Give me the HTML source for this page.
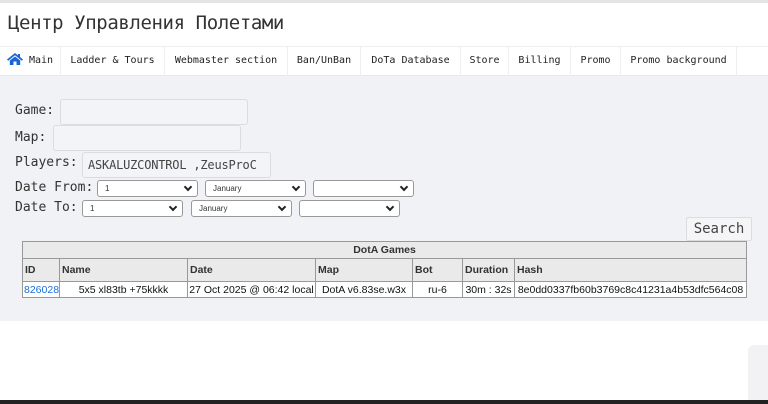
<!DOCTYPE html>
<html><head><meta charset="utf-8"><style>
*{box-sizing:border-box;margin:0;padding:0}
body{width:768px;height:404px;overflow:hidden;background:#fff;font-family:"DejaVu Sans Mono","Liberation Mono",monospace;color:#333;position:relative}
.top{position:absolute;left:0;top:0;width:768px;height:3px;background:#e4e4e6}
h1{position:absolute;left:8px;top:12px;font-size:19px;font-weight:normal;color:#333;font-family:"DejaVu Sans Mono","Liberation Mono","Noto Sans CJK SC",monospace;letter-spacing:-0.4px}
.nav{position:absolute;left:0;top:46px;height:30px;width:768px;border-top:1px solid #eee;border-bottom:1px solid #e8e8e8;display:flex}
.nav div{height:29px;line-height:28px;font-size:10px;border-right:1px solid #eee;text-align:center;color:#222}
.main{position:absolute;left:0;top:76px;width:768px;height:245px;background:#f1f2f6}
.lbl{position:absolute;font-size:13px;color:#333}
.inp{position:absolute;height:26px;border:1px solid #dcdcdf;border-radius:3px;background:#f3f4f7;font-size:12px;line-height:24px;padding-left:5px;color:#444;overflow:hidden;white-space:nowrap;letter-spacing:-0.2px}
.sel{position:absolute;height:17px;border:1px solid #999;border-radius:3px;background:#fff;font-size:8px;line-height:15px;padding-left:7px;font-family:"Liberation Sans",sans-serif}
.sel:after{content:"";position:absolute;right:6px;top:3px;width:4px;height:4px;border-right:2px solid #222;border-bottom:2px solid #222;transform:rotate(45deg)}
.btn{position:absolute;left:686px;top:217px;width:66px;height:24px;border:1px solid #ddd;border-radius:2px;background:#f5f5f7;font-size:14px;text-align:center;line-height:22px;color:#444}
table{position:absolute;left:22px;top:241px;width:724px;border-collapse:collapse;table-layout:fixed;font-family:"Liberation Sans",Arial,sans-serif;font-size:10.5px;background:#fff}
td,th{border:1px solid #999;padding:0 2px;white-space:nowrap;overflow:hidden}
th{background:#eaeaea;text-align:left;height:23px}
.cap th{text-align:center;height:17px;font-size:10.5px}
td{height:16px;text-align:center;color:#111}
a{color:#1a6fd8;text-decoration:none}
.bot{position:absolute;left:0;top:400px;width:768px;height:4px;background:#222}
.wid{position:absolute;left:748px;top:345px;width:20px;height:55px;background:#f2f2f4;border-radius:6px 0 0 0}
</style></head><body>
<div class="top"></div>
<h1>Центр Управления Полетами</h1>
<div class="nav">
<div style="width:61px"><svg width="16" height="12" viewBox="0 0 16 12" style="vertical-align:-2px"><path d="M8 0L0 6.5l1.2 1.2L8 2.2l6.8 5.5L16 6.5 13 4V1h-2v1.4z M2.8 7.5V12h3.7V8.5h3V12h3.7V7.5L8 3.5z" fill="#1a64d6"/></svg> Main</div>
<div style="width:104px">Ladder &amp; Tours</div>
<div style="width:123px">Webmaster section</div>
<div style="width:73px">Ban/UnBan</div>
<div style="width:100px">DoTa Database</div>
<div style="width:48px">Store</div>
<div style="width:62px">Billing</div>
<div style="width:50px">Promo</div>
<div style="width:116px">Promo background</div>
</div>
<div class="main"></div>
<div class="lbl" style="left:15px;top:103px">Game:</div>
<div class="inp" style="left:60px;top:99px;width:188px"></div>
<div class="lbl" style="left:15px;top:130px">Map:</div>
<div class="inp" style="left:53px;top:125px;width:188px"></div>
<div class="lbl" style="left:15px;top:155px">Players:</div>
<div class="inp" style="left:82px;top:152px;width:189px">ASKALUZCONTROL ,ZeusProC</div>
<div class="lbl" style="left:15px;top:180px">Date From:</div>
<div class="sel" style="left:97px;top:180px;width:101px">1</div>
<div class="sel" style="left:205px;top:180px;width:101px">January</div>
<div class="sel" style="left:313px;top:180px;width:101px"></div>
<div class="lbl" style="left:15px;top:200px">Date To:</div>
<div class="sel" style="left:82px;top:200px;width:101px">1</div>
<div class="sel" style="left:191px;top:200px;width:101px">January</div>
<div class="sel" style="left:299px;top:200px;width:101px"></div>
<div class="btn">Search</div>
<table>
<colgroup><col style="width:37px"><col style="width:128px"><col style="width:128px"><col style="width:97px"><col style="width:50px"><col style="width:52px"><col style="width:232px"></colgroup>
<tr class="cap"><th colspan="7">DotA Games</th></tr>
<tr><th>ID</th><th>Name</th><th>Date</th><th>Map</th><th>Bot</th><th>Duration</th><th>Hash</th></tr>
<tr><td style="text-align:left;padding:0 1px"><a>826028</a></td><td>5x5 xl83tb +75kkkk</td><td style="padding:0 1px">27 Oct 2025 @ 06:42 local</td><td>DotA v6.83se.w3x</td><td>ru-6</td><td style="padding:0 1px">30m : 32s</td><td style="padding:0 1px">8e0dd0337fb60b3769c8c41231a4b53dfc564c08</td></tr>
</table>
<div class="wid"></div>
<div class="bot"></div>
</body></html>
